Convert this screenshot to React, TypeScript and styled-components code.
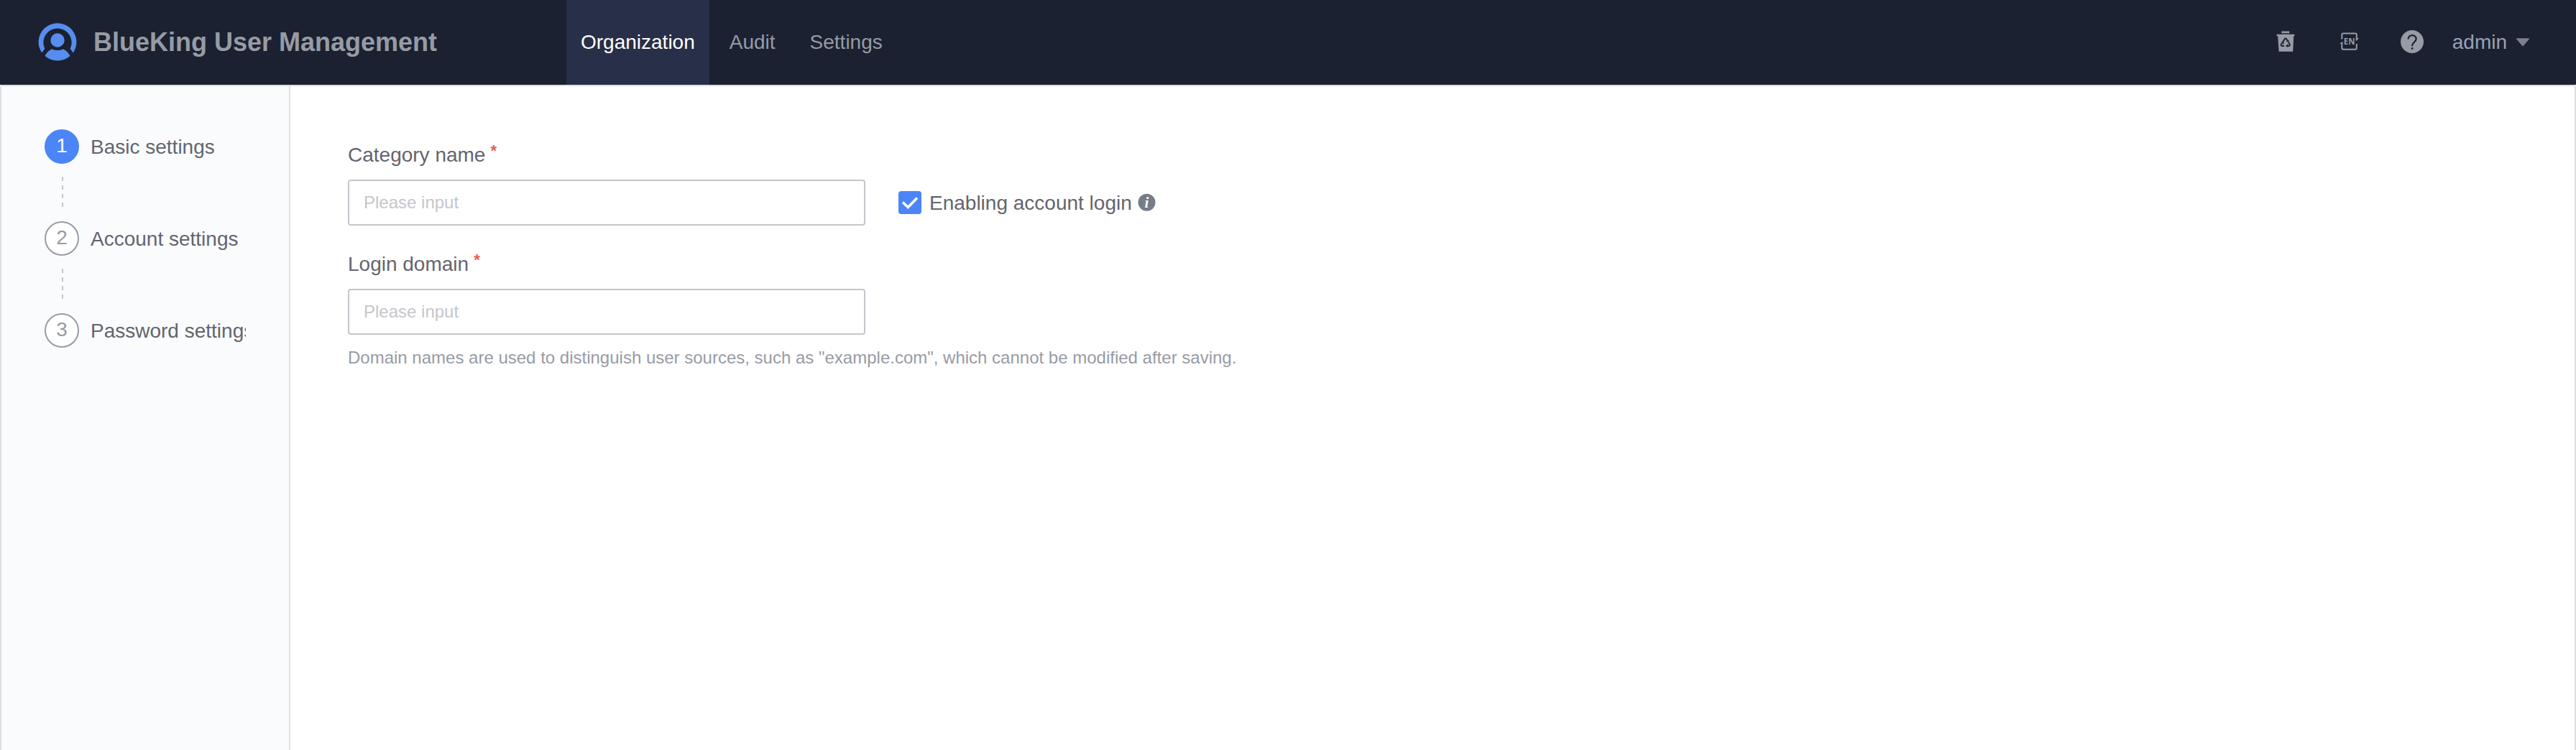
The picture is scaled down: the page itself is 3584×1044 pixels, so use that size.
import React from "react";
import styled, { createGlobalStyle } from "styled-components";

const GlobalStyle = createGlobalStyle`
  *, *::before, *::after { box-sizing: border-box; }
  body {
    margin: 0;
    background: #fff;
    color: #63656e;
    font-family: "Liberation Sans", Arial, sans-serif;
    font-size: 28px;
  }
`;

const Page = styled.div`
  display: flex;
  flex-direction: column;
  height: 1044px;
  overflow: hidden;
`;

const Header = styled.header`
  display: flex;
  align-items: center;
  height: 118px;
  flex: none;
  padding: 0 64px 0 53px;
  background: #1b2130;
`;

const Brand = styled.div`
  display: flex;
  align-items: center;
  width: 735px;
  flex: none;
`;

const Title = styled.h1`
  margin: 0 0 0 23px;
  color: #979ba5;
  font-size: 36px;
  line-height: 40px;
  font-weight: 700;
  white-space: nowrap;
`;

const Nav = styled.nav`
  display: flex;
  gap: 8px;
  height: 100%;
  flex: 1;
`;

const NavItem = styled.a<{ $active?: boolean }>`
  display: flex;
  align-items: center;
  padding: 0 20px;
  color: ${(p) => (p.$active ? "#fff" : "#979ba5")};
  background: ${(p) => (p.$active ? "#282f48" : "transparent")};
`;

const Tools = styled.div`
  display: flex;
  align-items: center;
`;

const ToolIcon = styled.svg<{ $gap: number }>`
  display: block;
  flex: none;
  margin-right: ${(p) => p.$gap}px;
`;

const UserName = styled.span`
  color: #96a2b9;
  margin-right: 12px;
`;

const Body = styled.div`
  display: flex;
  flex: 1;
  border: 2px solid #dcdee5;
  border-bottom: 0;
  border-radius: 4px 4px 0 0;
`;

const Sidebar = styled.aside`
  width: 402px;
  flex: none;
  padding: 60px 60px 0 60px;
  background: #fafbfd;
  border-right: 2px solid #dcdee5;
`;

const Step = styled.div`
  display: flex;
  align-items: center;
  gap: 16px;
  height: 48px;
`;

const StepNumber = styled.span<{ $active?: boolean }>`
  display: flex;
  align-items: center;
  justify-content: center;
  width: 48px;
  height: 48px;
  flex: none;
  border-radius: 50%;
  border: 2px solid ${(p) => (p.$active ? "#4b85f8" : "#979ba5")};
  background: ${(p) => (p.$active ? "#4b85f8" : "#fff")};
  color: ${(p) => (p.$active ? "#fff" : "#979ba5")};
  line-height: 40px;
  padding-bottom: 2px;
`;

const StepLabel = styled.span`
  flex: 1;
  overflow: hidden;
  padding-top: 2px;
  white-space: nowrap;
  line-height: 40px;
`;

const StepLine = styled.div`
  width: 2px;
  height: 42px;
  margin: 18px 0 20px 24px;
  background: repeating-linear-gradient(#c4c6cc 0 6px, transparent 6px 12px);
`;

const Content = styled.main`
  padding: 76px 0 0 80px;
`;

const Label = styled.label`
  display: flex;
  height: 40px;
  line-height: 40px;
`;

const Required = styled.span`
  margin: -6px 0 0 7px;
  color: #ea5a52;
  font-size: 22px;
  font-weight: 700;
`;

const FieldRow = styled.div<{ $after: number }>`
  display: flex;
  align-items: center;
  margin: 14px 0 ${(p) => p.$after}px;
`;

const Input = styled.input`
  width: 720px;
  height: 64px;
  padding: 0 20px;
  border: 2px solid #c4c6cc;
  border-radius: 4px;
  outline: none;
  background: #fff;
  font: 24px "Liberation Sans", Arial, sans-serif;
  &::placeholder { color: #c4c6cc; opacity: 1; }
`;

const CheckBox = styled.span`
  display: flex;
  width: 32px;
  height: 32px;
  margin: 0 11px 0 46px;
  border-radius: 4px;
  background: #4b85f8;
`;

const CheckText = styled.span`
  line-height: 40px;
  padding-top: 1px;
`;

const Hint = styled.p`
  margin: 0;
  color: #979ba5;
  font-size: 24px;
  line-height: 32px;
`;

const Logo = () => (
  <svg width="54" height="54" viewBox="0 0 54 54" fill="#568dee">
    <path d="M5.2 41.5A26.4 26.4 0 1 1 48.8 41.5L44.6 35.8A19.6 19.6 0 1 0 9.4 35.8Z" />
    <circle cx="27" cy="24" r="9.7" />
    <path d="M19 36.200Q27 40 35 36.200C39 38 42 41.500 44.600 45.800A26.400 26.400 0 0 1 9.400 45.800C12 41.500 15 38 19 36.200Z" />
  </svg>
);

const RecycleIcon = () => (
  <ToolIcon $gap={60} width="28" height="32" viewBox="0 0 28 32" fill="#979ba5">
    <path d="M8.300 .6H19.200V3.200H8.300ZM1.700 4.800H26.300V7.200H25.200L24.200 28.700H4.600L3.200 7.200H1.700Z" />
    <path
      d="M9.600 16.200 12.700 11.200Q13.900 9.600 15.100 11.200L16.700 13.800M18 15.800 19.600 18.500Q20.200 20.700 18.200 20.900H15.200M12.200 20.900H9.200Q7.200 20.700 7.800 18.800L8.600 17.600"
      fill="none"
      stroke="#1b2130"
      strokeWidth="2"
    />
    <path d="M17.200 18.200V23L14 20.900ZM7.300 16.200 11.300 15 11.400 18.800ZM18.600 12.400 18.200 16 15 14.800Z" fill="#1b2130" />
  </ToolIcon>
);

const LanguageIcon = () => (
  <ToolIcon $gap={56} width="30" height="28" viewBox="0 0 30 28">
    <path
      d="M4.300 9.500V3.500Q4.300 1.500 6.300 1.500H22.800Q24.800 1.500 24.800 3.500V11M24.800 16V21.700Q24.800 23.700 22.800 23.700H6.300Q4.300 23.700 4.300 21.700V14.500"
      fill="none"
      stroke="#979ba5"
      strokeWidth="2"
    />
    <path d="M23.800 12.200V8.800L28.200 8ZM5.300 12.800V16H1Z" fill="#979ba5" />
    <text
      x="6.800"
      y="17.200"
      textLength="15.600"
      lengthAdjust="spacingAndGlyphs"
      fontFamily="Open Sans, sans-serif"
      fontSize="12.500"
      fontWeight="700"
      fill="#979ba5"
    >
      EN
    </text>
  </ToolIcon>
);

const HelpIcon = () => (
  <ToolIcon $gap={40} width="32" height="35" viewBox="0 0 32 35">
    <circle cx="16" cy="16" r="16" fill="#979ba5" />
    <path
      d="M10.600 12.600C10.600 5.300 21.600 5.300 21.600 12.200C21.600 16.200 16.100 16.600 16.100 22.200"
      fill="none"
      stroke="#1b2130"
      strokeWidth="2.200"
    />
    <circle cx="16.100" cy="25.500" r="1.400" fill="#1b2130" />
  </ToolIcon>
);

const InfoIcon = () => (
  <svg width="36" height="28" viewBox="0 0 36 28">
    <circle cx="20.500" cy="13.800" r="12" fill="#767c88" />
    <text
      x="20.500"
      y="20.800"
      textAnchor="middle"
      fontFamily="Liberation Serif, serif"
      fontStyle="italic"
      fontWeight="700"
      fontSize="21"
      fill="#fff"
    >
      i
    </text>
  </svg>
);

const App = () => (
  <Page>
    <GlobalStyle />
    <Header>
      <Brand>
        <Logo />
        <Title>BlueKing User Management</Title>
      </Brand>
      <Nav>
        <NavItem $active>Organization</NavItem>
        <NavItem>Audit</NavItem>
        <NavItem>Settings</NavItem>
      </Nav>
      <Tools>
        <RecycleIcon />
        <LanguageIcon />
        <HelpIcon />
        <UserName>admin</UserName>
        <ToolIcon $gap={0} width="20" height="12" viewBox="0 0 20 12" fill="#7b808c">
          <path d="M2 .2H18Q19.800 .2 18.600 1.700L11 10.400Q10 11.400 9 10.400L1.400 1.700Q.2 .2 2 .2Z" />
        </ToolIcon>
      </Tools>
    </Header>
    <Body>
      <Sidebar>
        <Step>
          <StepNumber $active>1</StepNumber>
          <StepLabel>Basic settings</StepLabel>
        </Step>
        <StepLine />
        <Step>
          <StepNumber>2</StepNumber>
          <StepLabel>Account settings</StepLabel>
        </Step>
        <StepLine />
        <Step>
          <StepNumber>3</StepNumber>
          <StepLabel>Password settings</StepLabel>
        </Step>
      </Sidebar>
      <Content>
        <Label>
          Category name<Required>*</Required>
        </Label>
        <FieldRow $after={34}>
          <Input placeholder="Please input" />
          <CheckBox>
            <svg width="32" height="32" viewBox="0 0 32 32" fill="none" stroke="#fff" strokeWidth="3.600">
              <path d="M6 15.500 13.300 22.500 26 9.500" />
            </svg>
          </CheckBox>
          <CheckText>Enabling account login</CheckText>
          <InfoIcon />
        </FieldRow>
        <Label>
          Login domain<Required>*</Required>
        </Label>
        <FieldRow $after={16}>
          <Input placeholder="Please input" />
        </FieldRow>
        <Hint>
          Domain names are used to distinguish user sources, such as "example.com", which cannot be modified after saving.
        </Hint>
      </Content>
    </Body>
  </Page>
);

export default App;
